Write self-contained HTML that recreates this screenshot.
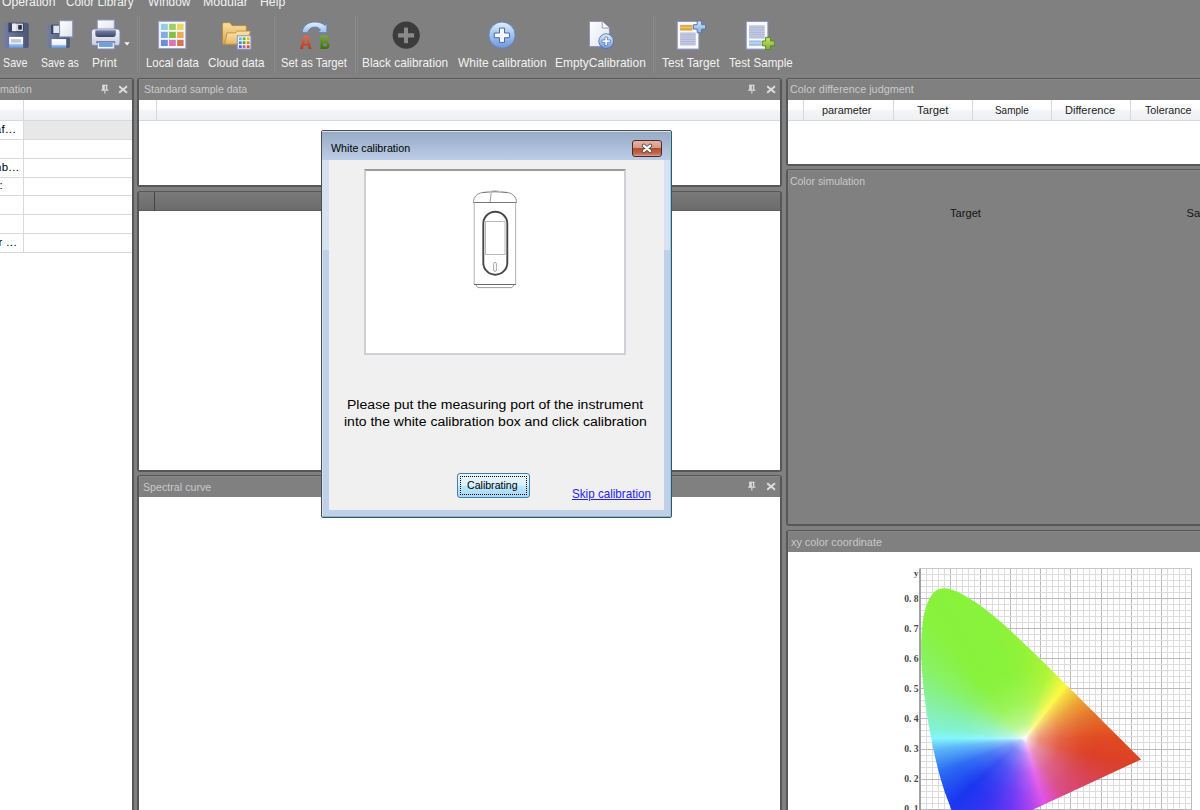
<!DOCTYPE html>
<html><head><meta charset="utf-8"><style>
html,body{margin:0;padding:0;}
body{width:1200px;height:810px;overflow:hidden;position:relative;background:#808080;font-family:"Liberation Sans", sans-serif;}
.t{position:absolute;white-space:nowrap;font-family:"Liberation Sans", sans-serif;}
</style></head><body>
<div class="t" style="left:1.68px;top:-4.24px;font-size:12.80px;line-height:12.80px;color:#f2f2f2;transform:scaleX(0.9500);transform-origin:0 0;">Operation</div><div class="t" style="left:66.45px;top:-4.24px;font-size:12.80px;line-height:12.80px;color:#f2f2f2;transform:scaleX(0.9220);transform-origin:0 0;">Color Library</div><div class="t" style="left:148.10px;top:-4.24px;font-size:12.80px;line-height:12.80px;color:#f2f2f2;transform:scaleX(0.9304);transform-origin:0 0;">Window</div><div class="t" style="left:202.78px;top:-4.24px;font-size:12.80px;line-height:12.80px;color:#f2f2f2;transform:scaleX(0.9683);transform-origin:0 0;">Modular</div><div class="t" style="left:259.64px;top:-4.24px;font-size:12.80px;line-height:12.80px;color:#f2f2f2;transform:scaleX(0.9594);transform-origin:0 0;">Help</div><div style="position:absolute;left:0px;top:75px;width:1200px;height:1px;background:#858585"></div><div style="position:absolute;left:137px;top:16px;width:1px;height:57px;background:#8b8b8b"></div><div style="position:absolute;left:139px;top:16px;width:1px;height:57px;background:#868686"></div><div style="position:absolute;left:273.5px;top:16px;width:1px;height:57px;background:#8b8b8b"></div><div style="position:absolute;left:275.5px;top:16px;width:1px;height:57px;background:#868686"></div><div style="position:absolute;left:355px;top:16px;width:1px;height:57px;background:#8b8b8b"></div><div style="position:absolute;left:357px;top:16px;width:1px;height:57px;background:#868686"></div><div style="position:absolute;left:652.5px;top:16px;width:1px;height:57px;background:#8b8b8b"></div><div style="position:absolute;left:654.5px;top:16px;width:1px;height:57px;background:#868686"></div><div class="t" style="left:3.07px;top:57.16px;font-size:12.80px;line-height:12.80px;color:#f2f2f2;transform:scaleX(0.8352);transform-origin:0 0;">Save</div><div class="t" style="left:40.57px;top:57.16px;font-size:12.80px;line-height:12.80px;color:#f2f2f2;transform:scaleX(0.8163);transform-origin:0 0;">Save as</div><div class="t" style="left:92.35px;top:57.16px;font-size:12.80px;line-height:12.80px;color:#f2f2f2;transform:scaleX(0.9463);transform-origin:0 0;">Print</div><div class="t" style="left:146.11px;top:57.16px;font-size:12.80px;line-height:12.80px;color:#f2f2f2;transform:scaleX(0.8942);transform-origin:0 0;">Local data</div><div class="t" style="left:208.45px;top:57.16px;font-size:12.80px;line-height:12.80px;color:#f2f2f2;transform:scaleX(0.9121);transform-origin:0 0;">Cloud data</div><div class="t" style="left:281.05px;top:57.16px;font-size:12.80px;line-height:12.80px;color:#f2f2f2;transform:scaleX(0.8779);transform-origin:0 0;">Set as Target</div><div class="t" style="left:362.48px;top:57.16px;font-size:12.80px;line-height:12.80px;color:#f2f2f2;transform:scaleX(0.9248);transform-origin:0 0;">Black calibration</div><div class="t" style="left:457.90px;top:57.16px;font-size:12.80px;line-height:12.80px;color:#f2f2f2;transform:scaleX(0.9372);transform-origin:0 0;">White calibration</div><div class="t" style="left:554.97px;top:57.16px;font-size:12.80px;line-height:12.80px;color:#f2f2f2;transform:scaleX(0.9317);transform-origin:0 0;">EmptyCalibration</div><div class="t" style="left:661.72px;top:57.16px;font-size:12.80px;line-height:12.80px;color:#f2f2f2;transform:scaleX(0.9207);transform-origin:0 0;">Test Target</div><div class="t" style="left:728.62px;top:57.16px;font-size:12.80px;line-height:12.80px;color:#f2f2f2;transform:scaleX(0.9051);transform-origin:0 0;">Test Sample</div><div style="position:absolute;left:-20px;top:78px;width:154px;height:800px;box-sizing:border-box;border:2px solid #575757;border-top-width:1px;border-radius:3px;background:#808080;"></div><div style="position:absolute;left:-18px;top:79px;width:150px;height:1px;background:#898989"></div><div style="position:absolute;left:-18px;top:79px;width:1px;height:797px;background:#868686"></div><div style="position:absolute;left:-18px;top:100px;width:150px;height:776px;background:#fff"></div><div class="t" style="left:-0.37px;top:84.37px;font-size:11.38px;line-height:11.38px;color:#c9c9c9;transform:scaleX(0.9360);transform-origin:0 0;clip-path:none;">mation</div><div style="position:absolute;left:137px;top:78px;width:645px;height:109px;box-sizing:border-box;border:2px solid #575757;border-top-width:1px;border-radius:3px;background:#808080;"></div><div style="position:absolute;left:139px;top:79px;width:641px;height:1px;background:#898989"></div><div style="position:absolute;left:139px;top:79px;width:1px;height:106px;background:#868686"></div><div style="position:absolute;left:139px;top:100px;width:641px;height:85px;background:#fff"></div><div class="t" style="left:143.67px;top:84.37px;font-size:11.38px;line-height:11.38px;color:#c9c9c9;transform:scaleX(0.9276);transform-origin:0 0;">Standard sample data</div><div style="position:absolute;left:137px;top:191px;width:645px;height:281px;box-sizing:border-box;border:2px solid #575757;border-top-width:1px;border-radius:3px;background:#808080;"></div><div style="position:absolute;left:139px;top:192px;width:641px;height:1px;background:#898989"></div><div style="position:absolute;left:139px;top:192px;width:1px;height:278px;background:#868686"></div><div style="position:absolute;left:139px;top:192px;width:641px;height:278px;background:#fff"></div><div style="position:absolute;left:137px;top:475px;width:645px;height:400px;box-sizing:border-box;border:2px solid #575757;border-top-width:1px;border-radius:3px;background:#808080;"></div><div style="position:absolute;left:139px;top:476px;width:641px;height:1px;background:#898989"></div><div style="position:absolute;left:139px;top:476px;width:1px;height:397px;background:#868686"></div><div style="position:absolute;left:139px;top:497px;width:641px;height:376px;background:#fff"></div><div class="t" style="left:143.37px;top:481.67px;font-size:11.38px;line-height:11.38px;color:#c9c9c9;transform:scaleX(0.9387);transform-origin:0 0;">Spectral curve</div><div style="position:absolute;left:786px;top:78px;width:430px;height:88px;box-sizing:border-box;border:2px solid #575757;border-top-width:1px;border-radius:3px;background:#808080;"></div><div style="position:absolute;left:788px;top:79px;width:426px;height:1px;background:#898989"></div><div style="position:absolute;left:788px;top:79px;width:1px;height:85px;background:#868686"></div><div style="position:absolute;left:788px;top:100px;width:426px;height:64px;background:#fff"></div><div class="t" style="left:790.49px;top:84.37px;font-size:11.38px;line-height:11.38px;color:#c9c9c9;transform:scaleX(0.9515);transform-origin:0 0;">Color difference judgment</div><div style="position:absolute;left:786px;top:169px;width:430px;height:357px;box-sizing:border-box;border:2px solid #575757;border-top-width:1px;border-radius:3px;background:#808080;"></div><div style="position:absolute;left:788px;top:170px;width:426px;height:1px;background:#898989"></div><div style="position:absolute;left:788px;top:170px;width:1px;height:354px;background:#868686"></div><div style="position:absolute;left:788px;top:191px;width:426px;height:333px;background:#808080"></div><div class="t" style="left:790.41px;top:175.97px;font-size:11.38px;line-height:11.38px;color:#c9c9c9;transform:scaleX(0.9192);transform-origin:0 0;">Color simulation</div><div style="position:absolute;left:786px;top:530px;width:430px;height:300px;box-sizing:border-box;border:2px solid #575757;border-top-width:1px;border-radius:3px;background:#808080;"></div><div style="position:absolute;left:788px;top:531px;width:426px;height:1px;background:#898989"></div><div style="position:absolute;left:788px;top:531px;width:1px;height:297px;background:#868686"></div><div style="position:absolute;left:788px;top:552px;width:426px;height:276px;background:#fff"></div><div class="t" style="left:790.80px;top:536.67px;font-size:11.38px;line-height:11.38px;color:#c9c9c9;transform:scaleX(0.9523);transform-origin:0 0;">xy color coordinate</div><svg style="position:absolute;left:99.5px;top:84px" width="10" height="11" viewBox="0 0 10 11"><rect x="2.2" y="0.8" width="5.2" height="1.1" fill="#dadada"/><rect x="2.2" y="0.8" width="2.6" height="5.2" fill="#dadada"/><rect x="5.9" y="0.8" width="1.4" height="5.2" fill="#dadada"/><rect x="1.2" y="5.6" width="7.2" height="1.2" fill="#dadada"/><rect x="4.3" y="6.8" width="1.1" height="2.8" fill="#dadada"/></svg><svg style="position:absolute;left:118px;top:85px" width="10" height="9" viewBox="0 0 10 9"><path d="M1.2 1.3 L9 7.7 M9 1.3 L1.2 7.7" stroke="#dcdcdc" stroke-width="2" fill="none"/></svg><svg style="position:absolute;left:746.5px;top:84px" width="10" height="11" viewBox="0 0 10 11"><rect x="2.2" y="0.8" width="5.2" height="1.1" fill="#dadada"/><rect x="2.2" y="0.8" width="2.6" height="5.2" fill="#dadada"/><rect x="5.9" y="0.8" width="1.4" height="5.2" fill="#dadada"/><rect x="1.2" y="5.6" width="7.2" height="1.2" fill="#dadada"/><rect x="4.3" y="6.8" width="1.1" height="2.8" fill="#dadada"/></svg><svg style="position:absolute;left:765.5px;top:85px" width="10" height="9" viewBox="0 0 10 9"><path d="M1.2 1.3 L9 7.7 M9 1.3 L1.2 7.7" stroke="#dcdcdc" stroke-width="2" fill="none"/></svg><svg style="position:absolute;left:746.5px;top:481px" width="10" height="11" viewBox="0 0 10 11"><rect x="2.2" y="0.8" width="5.2" height="1.1" fill="#dadada"/><rect x="2.2" y="0.8" width="2.6" height="5.2" fill="#dadada"/><rect x="5.9" y="0.8" width="1.4" height="5.2" fill="#dadada"/><rect x="1.2" y="5.6" width="7.2" height="1.2" fill="#dadada"/><rect x="4.3" y="6.8" width="1.1" height="2.8" fill="#dadada"/></svg><svg style="position:absolute;left:765.5px;top:482px" width="10" height="9" viewBox="0 0 10 9"><path d="M1.2 1.3 L9 7.7 M9 1.3 L1.2 7.7" stroke="#dcdcdc" stroke-width="2" fill="none"/></svg><div style="position:absolute;left:0px;top:100px;width:132px;height:20px;background:linear-gradient(#ffffff 0%,#fdfdfe 45%,#f2f4f7 55%,#eef0f3 100%);"></div><div style="position:absolute;left:0px;top:120px;width:132px;height:1px;background:#d9d9d9"></div><div style="position:absolute;left:23px;top:100px;width:1px;height:152px;background:#d9d9d9"></div><div style="position:absolute;left:24px;top:121px;width:108px;height:18.5px;background:#e8e8e8"></div><div style="position:absolute;left:0px;top:139.2px;width:132px;height:1px;background:#d9d9d9"></div><div style="position:absolute;left:0px;top:157.8px;width:132px;height:1px;background:#d9d9d9"></div><div style="position:absolute;left:0px;top:176.5px;width:132px;height:1px;background:#d9d9d9"></div><div style="position:absolute;left:0px;top:195.2px;width:132px;height:1px;background:#d9d9d9"></div><div style="position:absolute;left:0px;top:214px;width:132px;height:1px;background:#d9d9d9"></div><div style="position:absolute;left:0px;top:232.8px;width:132px;height:1px;background:#d9d9d9"></div><div style="position:absolute;left:0px;top:251.5px;width:132px;height:1px;background:#d9d9d9"></div><div class="t" style="left:-5.20px;top:124.27px;font-size:11.5px;line-height:11.5px;color:#000;letter-spacing:0.4px;">af...</div><div class="t" style="left:-8.20px;top:161.97px;font-size:11.5px;line-height:11.5px;color:#000;letter-spacing:0.4px;">mb...</div><div class="t" style="left:-7.00px;top:179.77px;font-size:11.5px;line-height:11.5px;color:#000;">e:</div><div class="t" style="left:-1.60px;top:236.87px;font-size:11.5px;line-height:11.5px;color:#000;letter-spacing:0.4px;">r ...</div><div style="position:absolute;left:139px;top:100px;width:641px;height:20px;background:linear-gradient(#ffffff 0%,#fdfdfe 45%,#f2f4f7 55%,#eef0f3 100%);"></div><div style="position:absolute;left:139px;top:120px;width:641px;height:1px;background:#d9d9d9"></div><div style="position:absolute;left:156px;top:100px;width:1px;height:20px;background:#d9d9d9"></div><div style="position:absolute;left:139px;top:192px;width:641px;height:19px;background:linear-gradient(#7a7a7a,#6b6b6b);"></div><div style="position:absolute;left:139px;top:210px;width:641px;height:1px;background:#5e5e5e"></div><div style="position:absolute;left:154px;top:192px;width:1px;height:19px;background:#444"></div><div style="position:absolute;left:788px;top:100px;width:420px;height:20px;background:linear-gradient(#ffffff 0%,#fdfdfe 45%,#f2f4f7 55%,#eef0f3 100%);"></div><div style="position:absolute;left:788px;top:120px;width:420px;height:1px;background:#d9d9d9"></div><div style="position:absolute;left:803px;top:100px;width:1px;height:20px;background:#d9d9d9"></div><div style="position:absolute;left:893px;top:100px;width:1px;height:20px;background:#d9d9d9"></div><div style="position:absolute;left:972px;top:100px;width:1px;height:20px;background:#d9d9d9"></div><div style="position:absolute;left:1051px;top:100px;width:1px;height:20px;background:#d9d9d9"></div><div style="position:absolute;left:1129.5px;top:100px;width:1px;height:20px;background:#d9d9d9"></div><div class="t" style="left:822.42px;top:104.75px;font-size:10.81px;line-height:10.81px;color:#1c1c1c;transform:scaleX(1.0055);transform-origin:0 0;">parameter</div><div class="t" style="left:917.32px;top:104.75px;font-size:10.81px;line-height:10.81px;color:#1c1c1c;transform:scaleX(1.0448);transform-origin:0 0;">Target</div><div class="t" style="left:994.69px;top:104.75px;font-size:10.81px;line-height:10.81px;color:#1c1c1c;transform:scaleX(0.9199);transform-origin:0 0;">Sample</div><div class="t" style="left:1064.74px;top:104.75px;font-size:10.81px;line-height:10.81px;color:#1c1c1c;transform:scaleX(1.0212);transform-origin:0 0;">Difference</div><div class="t" style="left:1145.43px;top:104.75px;font-size:10.81px;line-height:10.81px;color:#1c1c1c;transform:scaleX(0.9944);transform-origin:0 0;">Tolerance</div><div class="t" style="left:950.33px;top:208.12px;font-size:11.38px;line-height:11.38px;color:#141414;transform:scaleX(0.9783);transform-origin:0 0;">Target</div><div class="t" style="left:1186.50px;top:208.22px;font-size:11.2px;line-height:11.2px;color:#141414;">Sample</div><svg style="position:absolute;left:788px;top:553px" width="412" height="257" viewBox="788 553 412 257"><line x1="926.50" y1="568.40" x2="926.50" y2="839.30" stroke="#dddddd" stroke-width="1"/><line x1="932.50" y1="568.40" x2="932.50" y2="839.30" stroke="#dddddd" stroke-width="1"/><line x1="938.50" y1="568.40" x2="938.50" y2="839.30" stroke="#dddddd" stroke-width="1"/><line x1="944.50" y1="568.40" x2="944.50" y2="839.30" stroke="#dddddd" stroke-width="1"/><line x1="950.50" y1="568.40" x2="950.50" y2="839.30" stroke="#bababa" stroke-width="1"/><line x1="956.50" y1="568.40" x2="956.50" y2="839.30" stroke="#dddddd" stroke-width="1"/><line x1="962.50" y1="568.40" x2="962.50" y2="839.30" stroke="#dddddd" stroke-width="1"/><line x1="968.50" y1="568.40" x2="968.50" y2="839.30" stroke="#dddddd" stroke-width="1"/><line x1="974.50" y1="568.40" x2="974.50" y2="839.30" stroke="#dddddd" stroke-width="1"/><line x1="980.50" y1="568.40" x2="980.50" y2="839.30" stroke="#bababa" stroke-width="1"/><line x1="986.50" y1="568.40" x2="986.50" y2="839.30" stroke="#dddddd" stroke-width="1"/><line x1="992.50" y1="568.40" x2="992.50" y2="839.30" stroke="#dddddd" stroke-width="1"/><line x1="998.50" y1="568.40" x2="998.50" y2="839.30" stroke="#dddddd" stroke-width="1"/><line x1="1004.50" y1="568.40" x2="1004.50" y2="839.30" stroke="#dddddd" stroke-width="1"/><line x1="1010.50" y1="568.40" x2="1010.50" y2="839.30" stroke="#bababa" stroke-width="1"/><line x1="1016.50" y1="568.40" x2="1016.50" y2="839.30" stroke="#dddddd" stroke-width="1"/><line x1="1022.50" y1="568.40" x2="1022.50" y2="839.30" stroke="#dddddd" stroke-width="1"/><line x1="1028.50" y1="568.40" x2="1028.50" y2="839.30" stroke="#dddddd" stroke-width="1"/><line x1="1034.50" y1="568.40" x2="1034.50" y2="839.30" stroke="#dddddd" stroke-width="1"/><line x1="1040.50" y1="568.40" x2="1040.50" y2="839.30" stroke="#bababa" stroke-width="1"/><line x1="1046.50" y1="568.40" x2="1046.50" y2="839.30" stroke="#dddddd" stroke-width="1"/><line x1="1052.50" y1="568.40" x2="1052.50" y2="839.30" stroke="#dddddd" stroke-width="1"/><line x1="1058.50" y1="568.40" x2="1058.50" y2="839.30" stroke="#dddddd" stroke-width="1"/><line x1="1064.50" y1="568.40" x2="1064.50" y2="839.30" stroke="#dddddd" stroke-width="1"/><line x1="1070.50" y1="568.40" x2="1070.50" y2="839.30" stroke="#bababa" stroke-width="1"/><line x1="1077.50" y1="568.40" x2="1077.50" y2="839.30" stroke="#dddddd" stroke-width="1"/><line x1="1083.50" y1="568.40" x2="1083.50" y2="839.30" stroke="#dddddd" stroke-width="1"/><line x1="1089.50" y1="568.40" x2="1089.50" y2="839.30" stroke="#dddddd" stroke-width="1"/><line x1="1095.50" y1="568.40" x2="1095.50" y2="839.30" stroke="#dddddd" stroke-width="1"/><line x1="1101.50" y1="568.40" x2="1101.50" y2="839.30" stroke="#bababa" stroke-width="1"/><line x1="1107.50" y1="568.40" x2="1107.50" y2="839.30" stroke="#dddddd" stroke-width="1"/><line x1="1113.50" y1="568.40" x2="1113.50" y2="839.30" stroke="#dddddd" stroke-width="1"/><line x1="1119.50" y1="568.40" x2="1119.50" y2="839.30" stroke="#dddddd" stroke-width="1"/><line x1="1125.50" y1="568.40" x2="1125.50" y2="839.30" stroke="#dddddd" stroke-width="1"/><line x1="1131.50" y1="568.40" x2="1131.50" y2="839.30" stroke="#bababa" stroke-width="1"/><line x1="1137.50" y1="568.40" x2="1137.50" y2="839.30" stroke="#dddddd" stroke-width="1"/><line x1="1143.50" y1="568.40" x2="1143.50" y2="839.30" stroke="#dddddd" stroke-width="1"/><line x1="1149.50" y1="568.40" x2="1149.50" y2="839.30" stroke="#dddddd" stroke-width="1"/><line x1="1155.50" y1="568.40" x2="1155.50" y2="839.30" stroke="#dddddd" stroke-width="1"/><line x1="1161.50" y1="568.40" x2="1161.50" y2="839.30" stroke="#bababa" stroke-width="1"/><line x1="1167.50" y1="568.40" x2="1167.50" y2="839.30" stroke="#dddddd" stroke-width="1"/><line x1="1173.50" y1="568.40" x2="1173.50" y2="839.30" stroke="#dddddd" stroke-width="1"/><line x1="1179.50" y1="568.40" x2="1179.50" y2="839.30" stroke="#dddddd" stroke-width="1"/><line x1="1185.50" y1="568.40" x2="1185.50" y2="839.30" stroke="#dddddd" stroke-width="1"/><line x1="1191.50" y1="568.40" x2="1191.50" y2="839.30" stroke="#bababa" stroke-width="1"/><line x1="920.00" y1="839.50" x2="1190.90" y2="839.50" stroke="#bababa" stroke-width="1"/><line x1="920.00" y1="833.50" x2="1190.90" y2="833.50" stroke="#dddddd" stroke-width="1"/><line x1="920.00" y1="827.50" x2="1190.90" y2="827.50" stroke="#dddddd" stroke-width="1"/><line x1="920.00" y1="821.50" x2="1190.90" y2="821.50" stroke="#dddddd" stroke-width="1"/><line x1="920.00" y1="815.50" x2="1190.90" y2="815.50" stroke="#dddddd" stroke-width="1"/><line x1="920.00" y1="809.50" x2="1190.90" y2="809.50" stroke="#bababa" stroke-width="1"/><line x1="920.00" y1="803.50" x2="1190.90" y2="803.50" stroke="#dddddd" stroke-width="1"/><line x1="920.00" y1="797.50" x2="1190.90" y2="797.50" stroke="#dddddd" stroke-width="1"/><line x1="920.00" y1="791.50" x2="1190.90" y2="791.50" stroke="#dddddd" stroke-width="1"/><line x1="920.00" y1="785.50" x2="1190.90" y2="785.50" stroke="#dddddd" stroke-width="1"/><line x1="920.00" y1="779.50" x2="1190.90" y2="779.50" stroke="#bababa" stroke-width="1"/><line x1="920.00" y1="773.50" x2="1190.90" y2="773.50" stroke="#dddddd" stroke-width="1"/><line x1="920.00" y1="767.50" x2="1190.90" y2="767.50" stroke="#dddddd" stroke-width="1"/><line x1="920.00" y1="761.50" x2="1190.90" y2="761.50" stroke="#dddddd" stroke-width="1"/><line x1="920.00" y1="755.50" x2="1190.90" y2="755.50" stroke="#dddddd" stroke-width="1"/><line x1="920.00" y1="749.50" x2="1190.90" y2="749.50" stroke="#bababa" stroke-width="1"/><line x1="920.00" y1="742.50" x2="1190.90" y2="742.50" stroke="#dddddd" stroke-width="1"/><line x1="920.00" y1="736.50" x2="1190.90" y2="736.50" stroke="#dddddd" stroke-width="1"/><line x1="920.00" y1="730.50" x2="1190.90" y2="730.50" stroke="#dddddd" stroke-width="1"/><line x1="920.00" y1="724.50" x2="1190.90" y2="724.50" stroke="#dddddd" stroke-width="1"/><line x1="920.00" y1="718.50" x2="1190.90" y2="718.50" stroke="#bababa" stroke-width="1"/><line x1="920.00" y1="712.50" x2="1190.90" y2="712.50" stroke="#dddddd" stroke-width="1"/><line x1="920.00" y1="706.50" x2="1190.90" y2="706.50" stroke="#dddddd" stroke-width="1"/><line x1="920.00" y1="700.50" x2="1190.90" y2="700.50" stroke="#dddddd" stroke-width="1"/><line x1="920.00" y1="694.50" x2="1190.90" y2="694.50" stroke="#dddddd" stroke-width="1"/><line x1="920.00" y1="688.50" x2="1190.90" y2="688.50" stroke="#bababa" stroke-width="1"/><line x1="920.00" y1="682.50" x2="1190.90" y2="682.50" stroke="#dddddd" stroke-width="1"/><line x1="920.00" y1="676.50" x2="1190.90" y2="676.50" stroke="#dddddd" stroke-width="1"/><line x1="920.00" y1="670.50" x2="1190.90" y2="670.50" stroke="#dddddd" stroke-width="1"/><line x1="920.00" y1="664.50" x2="1190.90" y2="664.50" stroke="#dddddd" stroke-width="1"/><line x1="920.00" y1="658.50" x2="1190.90" y2="658.50" stroke="#bababa" stroke-width="1"/><line x1="920.00" y1="652.50" x2="1190.90" y2="652.50" stroke="#dddddd" stroke-width="1"/><line x1="920.00" y1="646.50" x2="1190.90" y2="646.50" stroke="#dddddd" stroke-width="1"/><line x1="920.00" y1="640.50" x2="1190.90" y2="640.50" stroke="#dddddd" stroke-width="1"/><line x1="920.00" y1="634.50" x2="1190.90" y2="634.50" stroke="#dddddd" stroke-width="1"/><line x1="920.00" y1="628.50" x2="1190.90" y2="628.50" stroke="#bababa" stroke-width="1"/><line x1="920.00" y1="622.50" x2="1190.90" y2="622.50" stroke="#dddddd" stroke-width="1"/><line x1="920.00" y1="616.50" x2="1190.90" y2="616.50" stroke="#dddddd" stroke-width="1"/><line x1="920.00" y1="610.50" x2="1190.90" y2="610.50" stroke="#dddddd" stroke-width="1"/><line x1="920.00" y1="604.50" x2="1190.90" y2="604.50" stroke="#dddddd" stroke-width="1"/><line x1="920.00" y1="598.50" x2="1190.90" y2="598.50" stroke="#bababa" stroke-width="1"/><line x1="920.00" y1="592.50" x2="1190.90" y2="592.50" stroke="#dddddd" stroke-width="1"/><line x1="920.00" y1="586.50" x2="1190.90" y2="586.50" stroke="#dddddd" stroke-width="1"/><line x1="920.00" y1="580.50" x2="1190.90" y2="580.50" stroke="#dddddd" stroke-width="1"/><line x1="920.00" y1="574.50" x2="1190.90" y2="574.50" stroke="#dddddd" stroke-width="1"/><line x1="920.00" y1="568.50" x2="1190.90" y2="568.50" stroke="#c8c8c8" stroke-width="1"/><line x1="920" y1="568.40" x2="920" y2="839.30" stroke="#a0a0a0" stroke-width="2"/><text x="918.6" y="812.40" text-anchor="end" font-family="Liberation Serif" font-weight="bold" font-size="9.6" fill="#484848">0. 1</text><text x="918.6" y="782.30" text-anchor="end" font-family="Liberation Serif" font-weight="bold" font-size="9.6" fill="#484848">0. 2</text><text x="918.6" y="752.20" text-anchor="end" font-family="Liberation Serif" font-weight="bold" font-size="9.6" fill="#484848">0. 3</text><text x="918.6" y="722.10" text-anchor="end" font-family="Liberation Serif" font-weight="bold" font-size="9.6" fill="#484848">0. 4</text><text x="918.6" y="692.00" text-anchor="end" font-family="Liberation Serif" font-weight="bold" font-size="9.6" fill="#484848">0. 5</text><text x="918.6" y="661.90" text-anchor="end" font-family="Liberation Serif" font-weight="bold" font-size="9.6" fill="#484848">0. 6</text><text x="918.6" y="631.80" text-anchor="end" font-family="Liberation Serif" font-weight="bold" font-size="9.6" fill="#484848">0. 7</text><text x="918.6" y="601.70" text-anchor="end" font-family="Liberation Serif" font-weight="bold" font-size="9.6" fill="#484848">0. 8</text><text x="918.4" y="575.8" text-anchor="end" font-family="Liberation Serif" font-weight="bold" font-size="9" fill="#3a3a3a">y</text></svg><div style="position:absolute;left:915px;top:580px;width:240px;height:230px;background:radial-gradient(circle at 110.0px 158.3px, rgba(255,255,255,1) 0px, rgba(255,255,255,0.7) 5px, rgba(255,255,255,0.4) 15px, rgba(255,255,255,0.15) 35px, rgba(255,255,255,0.04) 55px, rgba(255,255,255,0) 70px),conic-gradient(from 0deg at 110.0px 158.3px, #94f238 0deg, #acf438 18deg, #d4f73a 28deg, #f6f83c 35deg, #fcf83e 38deg, #f6dc38 42deg, #eca030 56deg, #e4702a 72deg, #e04a22 90deg, #dc4026 104deg, #d84454 122deg, #d84a84 146deg, #e050e6 164deg, #b044f0 174deg, #6a36f4 192deg, #3634f2 210deg, #1a36f0 228deg, #2c6af4 248deg, #5cb8f8 263deg, #84f6fc 270deg, #82f2d4 276deg, #86f0a4 290deg, #88f264 306deg, #88f23c 322deg, #8af23a 345deg, #94f238 360deg);clip-path:path('M57.40 257.79 C57.39 257.80 57.35 257.82 57.31 257.83 C57.27 257.84 57.22 257.85 57.16 257.86 C57.10 257.86 57.05 257.87 56.95 257.86 C56.86 257.84 56.78 257.87 56.59 257.76 C56.41 257.66 56.19 257.51 55.84 257.22 C55.49 256.93 54.88 256.37 54.48 256.02 C54.09 255.67 53.88 255.49 53.49 255.15 C53.10 254.81 52.64 254.42 52.14 253.97 C51.63 253.53 51.08 253.07 50.45 252.47 C49.82 251.87 49.12 251.22 48.34 250.36 C47.57 249.50 46.78 248.70 45.79 247.29 C44.79 245.88 43.65 244.26 42.35 241.90 C41.05 239.55 39.64 236.93 37.99 233.17 C36.34 229.42 34.53 225.07 32.48 219.36 C30.43 213.64 27.98 207.03 25.68 198.89 C23.38 190.75 20.93 181.14 18.67 170.50 C16.40 159.87 13.94 147.29 12.07 135.08 C10.21 122.87 8.45 109.39 7.47 97.24 C6.48 85.10 5.89 72.83 6.17 62.21 C6.46 51.58 7.43 41.38 9.18 33.49 C10.94 25.60 13.68 19.08 16.71 14.89 C19.74 10.69 23.59 9.04 27.36 8.33 C31.14 7.61 35.34 9.21 39.37 10.61 C43.41 12.01 47.62 14.49 51.56 16.72 C55.51 18.96 59.31 21.45 63.06 24.04 C66.82 26.63 70.45 29.38 74.11 32.26 C77.77 35.13 81.39 38.18 85.01 41.29 C88.62 44.40 92.19 47.64 95.78 50.92 C99.37 54.20 102.94 57.57 106.53 60.97 C110.11 64.37 113.72 67.85 117.30 71.33 C120.89 74.80 124.46 78.33 128.02 81.83 C131.58 85.33 135.16 88.85 138.67 92.34 C142.19 95.82 145.69 99.30 149.12 102.72 C152.55 106.14 155.95 109.53 159.26 112.83 C162.57 116.13 165.84 119.40 168.98 122.53 C172.13 125.66 175.22 128.71 178.14 131.62 C181.05 134.52 183.87 137.36 186.47 139.95 C189.07 142.55 191.45 144.91 193.73 147.18 C196.00 149.44 198.16 151.60 200.11 153.53 C202.05 155.46 203.23 156.60 205.41 158.77 C207.58 160.93 211.03 164.39 213.14 166.50 C215.25 168.61 216.70 170.03 218.08 171.41 C219.46 172.78 220.51 173.85 221.42 174.75 C222.33 175.65 222.87 176.18 223.53 176.83 C224.18 177.47 224.90 178.20 225.33 178.63 C225.77 179.07 226.01 179.31 226.14 179.44 Z');"></div><svg style="position:absolute;left:0;top:0" width="800" height="78" viewBox="0 0 800 78">
<defs>
<linearGradient id="flop" x1="0" x2="1" y1="0" y2="0"><stop offset="0" stop-color="#7580a0"/><stop offset="0.5" stop-color="#5e6888"/><stop offset="1" stop-color="#4c5575"/></linearGradient>
<linearGradient id="lbl" x1="0" x2="0" y1="0" y2="1"><stop offset="0" stop-color="#ffffff"/><stop offset="0.62" stop-color="#eef0f6"/><stop offset="0.63" stop-color="#a8c8f0"/><stop offset="1" stop-color="#5f90d8"/></linearGradient>
<linearGradient id="paper" x1="0" x2="1" y1="0" y2="1"><stop offset="0" stop-color="#ffffff"/><stop offset="1" stop-color="#dfe2ee"/></linearGradient>
<linearGradient id="prbody" x1="0" x2="0" y1="0" y2="1"><stop offset="0" stop-color="#f4f6fc"/><stop offset="1" stop-color="#c8cee4"/></linearGradient>
<linearGradient id="prslot" x1="0" x2="0" y1="0" y2="1"><stop offset="0" stop-color="#7882a8"/><stop offset="1" stop-color="#3e4668"/></linearGradient>
<linearGradient id="fold" x1="0" x2="0" y1="0" y2="1"><stop offset="0" stop-color="#f8e0a0"/><stop offset="1" stop-color="#d8a850"/></linearGradient>
<linearGradient id="fold2" x1="0" x2="0" y1="0" y2="1"><stop offset="0" stop-color="#fbe4a8"/><stop offset="1" stop-color="#e6b868"/></linearGradient>
<linearGradient id="arrow" x1="0" x2="0" y1="0" y2="1"><stop offset="0" stop-color="#e4f2fc"/><stop offset="1" stop-color="#9cbce8"/></linearGradient>
<linearGradient id="ared" x1="0" x2="0" y1="0" y2="1"><stop offset="0" stop-color="#e86a48"/><stop offset="1" stop-color="#b83a20"/></linearGradient>
<linearGradient id="bgrn" x1="0" x2="0" y1="0" y2="1"><stop offset="0" stop-color="#78b030"/><stop offset="1" stop-color="#3a6e10"/></linearGradient>
<linearGradient id="wcirc" x1="0" x2="0" y1="0" y2="1"><stop offset="0" stop-color="#e0f0fc"/><stop offset="0.45" stop-color="#a8c6ee"/><stop offset="1" stop-color="#6e96d8"/></linearGradient>
<linearGradient id="bplus" x1="0" x2="0" y1="0" y2="1"><stop offset="0" stop-color="#d0e6f8"/><stop offset="1" stop-color="#88aee0"/></linearGradient>
<linearGradient id="gplus" x1="0" x2="0" y1="0" y2="1"><stop offset="0" stop-color="#c8e070"/><stop offset="1" stop-color="#80b030"/></linearGradient>
</defs>

<!-- Save -->
<rect x="3.3" y="22.7" width="25.4" height="25.3" rx="1.8" fill="url(#flop)"/>
<rect x="8.4" y="22.7" width="15.4" height="9.6" fill="#3d4560"/>
<rect x="12" y="23.6" width="10.9" height="7.5" fill="#d6dae6"/>
<rect x="12" y="23.6" width="4" height="7.5" fill="#e8ecf4"/>
<rect x="18.2" y="25.1" width="3.6" height="4.5" fill="#262c3c"/>
<rect x="9.1" y="36.9" width="14" height="11.1" fill="url(#lbl)"/>
<rect x="11.1" y="39.1" width="9.8" height="3.6" fill="#c2c6dc"/>

<!-- Save as -->
<rect x="46.9" y="24.7" width="22.9" height="23.3" rx="1.6" fill="url(#flop)"/>
<rect x="51.1" y="24.7" width="9" height="9.3" fill="#3d4560"/>
<rect x="53.3" y="25.6" width="6" height="7.5" fill="#dfe6f2"/>
<rect x="51.6" y="39.1" width="14.6" height="8.9" fill="url(#lbl)"/>
<rect x="59.6" y="20.7" width="13.1" height="16.2" fill="url(#paper)" stroke="#8a92bc" stroke-width="1"/>

<!-- Print -->
<rect x="97.3" y="20" width="17" height="11.3" fill="url(#paper)" stroke="#9098c0" stroke-width="1"/>
<path d="M91.5 32 Q91.5 29 94.5 29 H117 Q120 29 120 32 V43 Q120 45.6 117.5 45.6 H94 Q91.5 45.6 91.5 43 Z" fill="url(#prbody)" stroke="#7c84ac" stroke-width="0.9"/>
<path d="M95.3 30.2 H115.8 V34 Q115.8 36.9 113 36.9 H98 Q95.3 36.9 95.3 34 Z" fill="url(#prslot)"/>
<rect x="96.2" y="41.3" width="18.9" height="1.7" fill="#5a6488"/>
<rect x="97.5" y="42.4" width="16.7" height="6.5" fill="#f2f4fa" stroke="#8a92bc" stroke-width="0.8"/>
<rect x="99" y="43" width="13.7" height="3.9" fill="#6aa0e4"/>
<path d="M124.2 42.3 H129.8 L127 45.4 Z" fill="#f4f4f4"/>

<!-- Local data -->
<rect x="158.6" y="21.3" width="27.2" height="27.2" fill="#f6f7fc" stroke="#9aa2cc" stroke-width="1"/>
<rect x="160.9" y="23.8" width="6.9" height="6.2" fill="#90d0e0"/>
<rect x="169.1" y="23.8" width="6.7" height="6.2" fill="#a0d060"/>
<rect x="177.1" y="23.8" width="6.5" height="6.2" fill="#e8d858"/>
<rect x="160.9" y="31.8" width="6.9" height="6.2" fill="#84aae0"/>
<rect x="169.1" y="31.8" width="6.7" height="6.2" fill="#84c044"/>
<rect x="177.1" y="31.8" width="6.5" height="6.2" fill="#e8aa58"/>
<rect x="160.9" y="39.8" width="6.9" height="6.2" fill="#6c8cd8"/>
<rect x="169.1" y="39.8" width="6.7" height="6.2" fill="#d874c0"/>
<rect x="177.1" y="39.8" width="6.5" height="6.2" fill="#d87454"/>

<!-- Cloud data -->
<path d="M222.5 24 Q222.5 22.7 223.8 22.7 H230 L232 25.6 H245 Q246.4 25.6 246.4 27 V44.2 H222.5 Z" fill="url(#fold)" stroke="#b88838" stroke-width="0.9"/>
<path d="M224.7 44.2 L227 32.9 H235.8 L237.1 31.1 H249.6 Q250.4 31.1 250.2 32 L246.4 44.2 Z" fill="url(#fold2)" stroke="#c09040" stroke-width="0.9"/>
<rect x="237.3" y="35.8" width="13.6" height="13.3" fill="#f6f7fc" stroke="#8c94c4" stroke-width="1"/>
<rect x="238.9" y="37.4" width="2.8" height="2.8" fill="#60c0d8"/><rect x="242.7" y="37.4" width="2.8" height="2.8" fill="#60b830"/><rect x="246.8" y="37.4" width="2.8" height="2.8" fill="#e8c020"/>
<rect x="238.9" y="41.3" width="2.8" height="2.8" fill="#5088d8"/><rect x="242.7" y="41.3" width="2.8" height="2.8" fill="#58a820"/><rect x="246.8" y="41.3" width="2.8" height="2.8" fill="#e08820"/>
<rect x="238.9" y="45.3" width="2.8" height="2.8" fill="#4068d8"/><rect x="242.7" y="45.3" width="2.8" height="2.8" fill="#d050b0"/><rect x="246.8" y="45.3" width="2.8" height="2.8" fill="#d05030"/>

<!-- Set as Target -->
<path d="M302.2 32.7 C302.5 26 308 22 315 22 C319.5 22 323 23.5 325.2 25.6 L326.9 23.2 L326.9 32.7 L317.8 32.7 L320.4 29.9 C319 28 317 27.1 315 27.1 C311 27.1 308.5 29.5 307.6 32.7 Z" fill="url(#arrow)" stroke="#5c7cbc" stroke-width="0.9" stroke-linejoin="round"/>
<path fill-rule="evenodd" fill="url(#ared)" d="M300 48.9 L303.8 35.4 L307.8 35.4 L311.6 48.9 L308.8 48.9 L308 45.8 L303.6 45.8 L302.8 48.9 Z M304.1 43.4 L307.5 43.4 L305.8 37.6 Z"/>
<path fill-rule="evenodd" fill="url(#bgrn)" d="M320.4 35.4 H325.5 C328 35.4 329 37 329 38.8 C329 40.5 328 41.5 326.8 41.9 C328.5 42.3 329.6 43.6 329.6 45.4 C329.6 47.6 328 48.9 325.5 48.9 H320.4 Z M323.2 37.6 H325 C326 37.6 326.4 38.2 326.4 39 C326.4 39.8 326 40.6 325 40.6 H323.2 Z M323.2 42.9 H325.3 C326.5 42.9 327 43.7 327 44.7 C327 45.7 326.5 46.6 325.3 46.6 H323.2 Z"/>

<!-- Black calibration -->
<circle cx="406.2" cy="35.2" r="13.6" fill="#3c3c3c"/>
<rect x="404" y="27.6" width="4" height="15.6" fill="#8a8a8a"/>
<rect x="398.1" y="33.3" width="16" height="4.2" fill="#8a8a8a"/>

<!-- White calibration -->
<circle cx="502" cy="35.2" r="13.2" fill="url(#wcirc)" stroke="#5c7ec0" stroke-width="0.9"/>
<path d="M499.5 28.1 H504.5 V33 H509.4 V37.7 H504.5 V42.4 H499.5 V37.7 H494.3 V33 H499.5 Z" fill="#f8f8fc" stroke="#3e5e9e" stroke-width="0.9" stroke-linejoin="round"/>

<!-- EmptyCalibration -->
<path d="M589.4 21.4 H602.2 L609.4 28 V46.6 H589.4 Z" fill="url(#paper)" stroke="#8890c0" stroke-width="1"/>
<path d="M602.2 21.4 V28 H609.4" fill="#ffffff" stroke="#8890c0" stroke-width="0.9"/>
<circle cx="606.2" cy="41.2" r="7.4" fill="url(#wcirc)" stroke="#5070b0" stroke-width="0.9"/>
<path d="M605 37 H607.4 V40 H610.4 V42.4 H607.4 V45.4 H605 V42.4 H602 V40 H605 Z" fill="#ffffff" stroke="#40609e" stroke-width="0.6"/>

<!-- Test Target -->
<rect x="677.2" y="21.4" width="21.7" height="27.7" fill="#fafbfe" stroke="#8890c0" stroke-width="1"/>
<rect x="680.1" y="24.9" width="12.4" height="5.7" fill="#e0a840"/>
<rect x="680.1" y="26.8" width="12.4" height="1.2" fill="#f0c870"/>
<rect x="680.1" y="32.3" width="15.6" height="13.3" fill="#c4cae2"/>
<g fill="#aab2d2"><rect x="680.1" y="34.3" width="15.6" height="0.8"/><rect x="680.1" y="36.6" width="15.6" height="0.8"/><rect x="680.1" y="38.9" width="15.6" height="0.8"/><rect x="680.1" y="41.2" width="15.6" height="0.8"/><rect x="680.1" y="43.5" width="15.6" height="0.8"/></g>
<path d="M697.2 20.9 H701.6 V24.7 H705.5 V29.1 H701.6 V32.8 H697.2 V29.1 H693.4 V24.7 H697.2 Z" fill="url(#bplus)" stroke="#5878b0" stroke-width="1" stroke-linejoin="round"/>

<!-- Test Sample -->
<rect x="746.2" y="21.4" width="21.7" height="27.7" fill="#fafbfe" stroke="#8890c0" stroke-width="1"/>
<rect x="749.1" y="25.1" width="15.6" height="13.6" fill="#c4cae2"/>
<g fill="#aab2d2"><rect x="749.1" y="27.3" width="15.6" height="0.8"/><rect x="749.1" y="29.6" width="15.6" height="0.8"/><rect x="749.1" y="31.9" width="15.6" height="0.8"/><rect x="749.1" y="34.2" width="15.6" height="0.8"/><rect x="749.1" y="36.5" width="15.6" height="0.8"/></g>
<rect x="749.1" y="40.4" width="12" height="5.5" fill="#9ec0ec"/>
<rect x="749.1" y="42.4" width="12" height="1" fill="#c8e0f8"/>
<path d="M765.6 37.4 H770.6 V41 H774.4 V45.8 H770.6 V49.6 H765.6 V45.8 H762.2 V41 H765.6 Z" fill="url(#gplus)" stroke="#5a8a20" stroke-width="1" stroke-linejoin="round"/>
</svg><div style="position:absolute;left:321px;top:130px;width:351px;height:388px;box-sizing:border-box;border:1px solid #4e4e4e;border-radius:2px;background:#c0d0e8;"></div><div style="position:absolute;left:322px;top:131px;width:349px;height:1px;background:#d4dde8"></div><div style="position:absolute;left:322px;top:131px;width:1px;height:386px;background:#d6e0ee"></div><div style="position:absolute;left:322px;top:132px;width:349px;height:28px;background:linear-gradient(#97abc7,#bccde6);"></div><div style="position:absolute;left:670px;top:131px;width:1px;height:386px;background:#7fd0f0"></div><div style="position:absolute;left:322px;top:516px;width:349px;height:1px;background:#6fc0e0"></div><div style="position:absolute;left:329px;top:159.6px;width:335px;height:350px;background:#f0f0f0"></div><div style="position:absolute;left:323px;top:159.6px;width:6px;height:90.7px;background:#d6e2f2"></div><div style="position:absolute;left:663.9px;top:159.6px;width:5.9px;height:90.7px;background:#d6e2f2"></div><div class="t" style="left:330.50px;top:142.87px;font-size:11.38px;line-height:11.38px;color:#000;transform:scaleX(0.9405);transform-origin:0 0;">White calibration</div><div style="position:absolute;left:632px;top:140px;width:30px;height:17px;box-sizing:border-box;border:1px solid #4b2a2a;border-radius:3px;background:linear-gradient(#e7b4a4 0%,#d69a86 45%,#b14f2e 50%,#c26a4f 85%,#dba696 100%);"></div><svg style="position:absolute;left:640px;top:143px" width="14" height="11" viewBox="0 0 14 11"><path d="M3.8 2.6 L10.2 8.2 M10.2 2.6 L3.8 8.2" stroke="#5a4848" stroke-width="3.8" stroke-linecap="round"/><path d="M3.8 2.6 L10.2 8.2 M10.2 2.6 L3.8 8.2" stroke="#fff" stroke-width="2.2" stroke-linecap="round"/></svg><div style="position:absolute;left:364px;top:169px;width:262px;height:186px;box-sizing:border-box;border:2px solid #d0d0d4;border-top-color:#9a9a9a;background:#fff;"></div><svg style="position:absolute;left:364px;top:169px" width="262" height="186" viewBox="364 169 262 186">
<g fill="none" stroke-width="1">
<path d="M473.5 202.5 C473.5 197 477 193.5 482.5 192.5 M507.5 192.5 C513 193.5 516.5 197 516.5 202.5" stroke="#8c8c8c"/>
<path d="M482.5 192.5 C490 191.6 500 191.6 507.5 192.5" stroke="#666" stroke-width="1.2"/>
<path d="M489 191.8 C492 190.2 498 190.2 501 191.8" stroke="#c8c8c8"/>
<path d="M491.2 193 L490 202.5" stroke="#999"/>
<path d="M473.5 202.5 L516.5 202.5" stroke="#777"/>
<path d="M474.2 202.5 L474.2 284.5 M515.6 202.5 L515.6 284.5" stroke="#b4b4b4"/>
<path d="M474 284.5 L516 284.5" stroke="#6a6a6a"/>
<path d="M475.9 285 L477.9 287.6 L512 287.6 L513.9 285" stroke="#9c9c9c"/>
<rect x="485.5" y="221.5" width="19.5" height="33" stroke="#b8b8b8"/>
<rect x="493.6" y="262.4" width="2.8" height="9" rx="1.4" stroke="#a8a8a8"/>
</g>
<rect x="483.3" y="211.7" width="24" height="63" rx="12" fill="none" stroke="#484848" stroke-width="1.9"/>
</svg><div class="t" style="left:347.20px;top:397.62px;font-size:13.08px;line-height:13.08px;color:#000;transform:scaleX(1.0747);transform-origin:0 0;">Please put the measuring port of the instrument</div><div class="t" style="left:344.12px;top:414.62px;font-size:13.08px;line-height:13.08px;color:#000;transform:scaleX(1.0705);transform-origin:0 0;">into the white calibration box and click calibration</div><div style="position:absolute;left:457px;top:473px;width:73px;height:25px;box-sizing:border-box;border:1px solid #3c7fb1;border-radius:3px;background:linear-gradient(#eaf6fd 0%,#d9f0fc 50%,#bee6fd 51%,#a7d9f5 100%);"></div><div style="position:absolute;left:460px;top:476px;width:67px;height:19px;box-sizing:border-box;border:1px dotted #000;"></div><div class="t" style="left:467.40px;top:480.29px;font-size:11.24px;line-height:11.24px;color:#000;transform:scaleX(0.9419);transform-origin:0 0;">Calibrating</div><div class="t" style="left:571.64px;top:488.37px;font-size:12.09px;line-height:12.09px;color:#2323ee;transform:scaleX(0.9639);transform-origin:0 0;text-decoration:underline;">Skip calibration</div>
</body></html>
